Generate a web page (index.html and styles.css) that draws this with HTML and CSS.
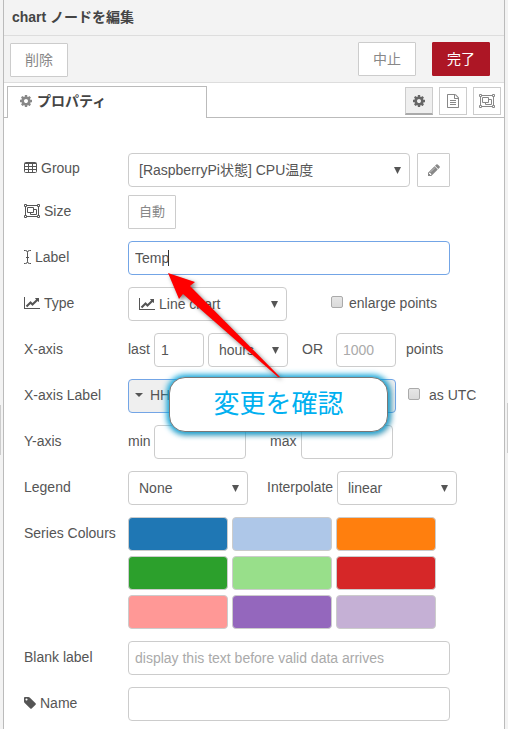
FILE: index.html
```html
<!DOCTYPE html>
<html lang="ja">
<head>
<meta charset="utf-8">
<meta name="viewport" content="width=device-width, initial-scale=1">
<title>chart ノードを編集</title>
<link rel="stylesheet" href="styles.css">
</head>
<body>
<svg class="sprite" aria-hidden="true">
  <symbol id="cog" viewBox="128 0 1536 1792"><path d="M1152 896q0-106-75-181t-181-75-181 75-75 181 75 181 181 75 181-75 75-181zm512-109v222q0 12-8 23t-20 13l-185 28q-19 54-39 91 35 50 107 138 10 12 10 25t-9 23q-27 37-99 108t-94 71q-12 0-26-9l-138-108q-44 23-91 38-16 136-29 186-7 28-36 28h-222q-14 0-24.5-8.5t-11.5-21.5l-28-184q-49-16-90-37l-141 107q-10 9-25 9-14 0-25-11-126-114-165-168-7-10-7-23 0-12 8-23 15-21 51-66.5t54-70.5q-27-50-41-99l-183-27q-13-2-21-12.5t-8-23.5v-222q0-12 8-23t19-13l186-28q14-46 39-92-40-57-107-138-10-12-10-24 0-10 9-23 26-36 98.5-107.5t94.5-71.5q13 0 26 10l138 107q44-23 91-38 16-136 29-186 7-28 36-28h222q14 0 24.5 8.5t11.5 21.5l28 184q49 16 90 37l142-107q9-9 24-9 13 0 25 10 129 119 165 170 7 8 7 22 0 12-8 23-15 21-51 66.5t-54 70.5q26 50 41 98l183 28q13 2 21 12.5t8 23.5z"/></symbol>
  <symbol id="file" viewBox="128 0 1536 1792"><path d="M1596 380q28 28 48 76t20 88v1152q0 40-28 68t-68 28h-1344q-40 0-68-28t-28-68v-1600q0-40 28-68t68-28h896q40 0 88 20t76 48zm-444-244v376h376q-10-29-22-41l-313-313q-12-12-41-22zm384 1528v-1024h-416q-40 0-68-28t-28-68v-416h-768v1536h1280zm-1024-864q0-14 9-23t23-9h704q14 0 23 9t9 23v64q0 14-9 23t-23 9h-704q-14 0-23-9t-9-23v-64zm736 224q14 0 23 9t9 23v64q0 14-9 23t-23 9h-704q-14 0-23-9t-9-23v-64q0-14 9-23t23-9h704zm0 256q14 0 23 9t9 23v64q0 14-9 23t-23 9h-704q-14 0-23-9t-9-23v-64q0-14 9-23t23-9h704z"/></symbol>
  <symbol id="group" viewBox="0 0 16 14"><path fill="none" stroke="currentColor" d="M.5.5h2v2h-2zM13.5.5h2v2h-2zM.5 11.5h2v2h-2zM13.5 11.5h2v2h-2zM3 1.5h10M3 12.5h10M1.5 3v8M14.5 3v8M3.5 3.5h6v5h-6zM10 5.5h2.500v5h-6V9"/></symbol>
  <symbol id="table" viewBox="0 0 13 14"><path fill="none" stroke="currentColor" d="M1.500 1.500h10q1 0 1 1v8q0 1-1 1h-10q-1 0-1-1v-8q0-1 1-1zM1 2.500h11M1 5.500h11M1 8.500h11M4.500 2v9M8.500 2v9"/></symbol>
  <symbol id="cursor" viewBox="0 0 7 14"><path fill="none" stroke="currentColor" d="M0 .5h1.500q2 0 2 2v9q0 2-2 2H0M7 .5H5.500q-2 0-2 2M7 13.500H5.500q-2 0-2-2M2 7.500h3"/></symbol>
  <symbol id="line" viewBox="0 0 2048 1792"><path d="M2048 1536v128h-2048v-1536h128v1408h1920zm-128-1248v435q0 21-19.500 29.500t-35.500-7.500l-121-121-633 633q-10 10-23 10t-23-10l-233-233-416 416-192-192 585-585q10-10 23-10t23 10l233 233 464-464-121-121q-16-16-7.500-35.500t29.500-19.500h435q14 0 23 9t9 23z"/></symbol>
  <symbol id="pencil" viewBox="128 0 1536 1792"><path d="M491 1536l91-91-235-235-91 91v107h128v128h107zm523-928q0-22-22-22-10 0-17 7l-542 542q-7 7-7 17 0 22 22 22 10 0 17-7l542-542q7-7 7-17zm-54-192l416 416-832 832h-416v-416zm683 96q0 53-37 90l-166 166-416-416 166-165q36-38 90-38 53 0 91 38l235 234q37 39 37 91z"/></symbol>
  <symbol id="tag" viewBox="128 0 1536 1792"><path d="M576 448q0-53-37.500-90.500t-90.500-37.500-90.500 37.500-37.500 90.500 37.500 90.500 90.500 37.500 90.500-37.500 37.500-90.500zm1067 576q0 53-37 90l-491 492q-39 37-91 37-53 0-90-37l-715-716q-38-37-64.500-101t-26.500-117v-416q0-52 38-90t90-38h416q53 0 117 26.500t102 64.500l715 714q37 39 37 91z"/></symbol>
</svg>
<div class="app">
  <div class="gutter gutter-left"></div>
  <main class="tray">
    <header class="title">chart ノードを編集</header>
    <div class="toolbar">
      <button type="button" class="btn delete">削除</button>
      <div class="actions">
        <button type="button" class="btn">中止</button>
        <button type="button" class="btn primary">完了</button>
      </div>
    </div>
    <div class="tabs">
      <button type="button" class="tab"><svg class="icon w12"><use href="#cog"/></svg>プロパティ</button>
      <div class="views">
        <button type="button" class="view selected" aria-label="プロパティ"><svg class="icon w12"><use href="#cog"/></svg></button>
        <button type="button" class="view" aria-label="説明"><svg class="icon w12"><use href="#file"/></svg></button>
        <button type="button" class="view" aria-label="外観"><svg class="icon w16"><use href="#group"/></svg></button>
      </div>
    </div>
    <form class="form">
      <div class="row compact">
        <label class="name" for="f-group"><svg class="icon w13"><use href="#table"/></svg>Group</label>
        <div class="controls">
          <span class="select wide"><select id="f-group"><option>[RaspberryPi状態] CPU温度</option></select></span>
          <button type="button" class="btn edit" aria-label="編集"><svg class="icon w12"><use href="#pencil"/></svg></button>
        </div>
      </div>
      <div class="row">
        <label class="name" for="f-size"><svg class="icon w16"><use href="#group"/></svg>Size</label>
        <div class="controls"><button type="button" id="f-size" class="btn size">自動</button></div>
      </div>
      <div class="row">
        <label class="name" for="f-label"><svg class="icon w7"><use href="#cursor"/></svg>Label</label>
        <div class="controls anchor"><input id="f-label" class="full active" type="text" value="Temp"><span class="caret"></span></div>
      </div>
      <div class="row">
        <label class="name" for="f-type"><svg class="icon w16"><use href="#line"/></svg>Type</label>
        <div class="controls">
          <span class="select type"><svg class="icon w16"><use href="#line"/></svg><select id="f-type"><option>Line chart</option></select></span>
          <label class="check enlarge"><input type="checkbox"><span>enlarge points</span></label>
        </div>
      </div>
      <div class="row">
        <label class="name" for="f-last">X-axis</label>
        <div class="controls">
          <label class="text unit" for="f-last">last</label>
          <input id="f-last" class="count" type="text" value="1">
          <span class="select period"><select aria-label="期間"><option>hours</option></select></span>
          <label class="text or" for="f-points">OR</label>
          <input id="f-points" class="points" type="text" placeholder="1000">
          <label class="text after" for="f-points">points</label>
        </div>
      </div>
      <div class="row">
        <label class="name" for="f-format">X-axis Label</label>
        <div class="controls">
          <button type="button" id="f-format" class="format">HH:mm:ss</button>
          <label class="check utc"><input type="checkbox"><span>as UTC</span></label>
        </div>
      </div>
      <div class="row">
        <label class="name" for="f-min">Y-axis</label>
        <div class="controls">
          <label class="text unit" for="f-min">min</label>
          <input id="f-min" class="limit" type="text">
          <label class="text max" for="f-max">max</label>
          <input id="f-max" class="limit" type="text">
        </div>
      </div>
      <div class="row">
        <label class="name" for="f-legend">Legend</label>
        <div class="controls">
          <span class="select short"><select id="f-legend"><option>None</option></select></span>
          <label class="text interpolate" for="f-inter">Interpolate</label>
          <span class="select short"><select id="f-inter"><option>linear</option></select></span>
        </div>
      </div>
      <div class="row">
        <span class="name">Series Colours</span>
        <div class="swatches">
          <button type="button" class="swatch c1" aria-label="1"></button>
          <button type="button" class="swatch c2" aria-label="2"></button>
          <button type="button" class="swatch c3" aria-label="3"></button>
          <button type="button" class="swatch c4" aria-label="4"></button>
          <button type="button" class="swatch c5" aria-label="5"></button>
          <button type="button" class="swatch c6" aria-label="6"></button>
          <button type="button" class="swatch c7" aria-label="7"></button>
          <button type="button" class="swatch c8" aria-label="8"></button>
          <button type="button" class="swatch c9" aria-label="9"></button>
        </div>
      </div>
      <div class="row">
        <label class="name" for="f-blank">Blank label</label>
        <div class="controls"><input id="f-blank" class="full" type="text" placeholder="display this text before valid data arrives"></div>
      </div>
      <div class="row">
        <label class="name" for="f-name"><svg class="icon w12"><use href="#tag"/></svg>Name</label>
        <div class="controls"><input id="f-name" class="full" type="text"></div>
      </div>
    </form>
  </main>
  <div class="gutter gutter-right"></div>
  <svg class="arrow" viewBox="0 0 130 120" aria-hidden="true"><path d="M8 13l27 9-5 4 90 91h-2L23 34l-4 5z"/></svg>
  <div class="callout">変更を確認</div>
</div>
</body>
</html>
```

FILE: styles.css
```css
* {
  box-sizing: border-box;
}

body {
  margin: 0;
  background: #f3f3f3;
  color: #555;
  font: 14px/20px "Liberation Sans", "Noto Sans CJK JP", sans-serif;
}

button,
input,
select {
  margin: 0;
  font: inherit;
  color: inherit;
}

.sprite {
  display: none;
}

.app {
  position: relative;
  display: flex;
  min-height: 100vh;
}

.gutter {
  flex: none;
  width: 3px;
  padding-top: 405px;
}

.gutter::before {
  content: "";
  display: block;
  width: 1px;
  height: 50px;
  background: #ccc;
}

.gutter-right {
  padding-top: 403px;
}

.gutter-right::before {
  margin-left: auto;
}

.tray {
  flex: 1;
  min-width: 0;
  background: #fff;
  border: solid #bbb;
  border-width: 0 1px;
}

.title {
  height: 36px;
  padding: 7px 8px;
  background: #f3f3f3;
  border-bottom: 1px solid #ddd;
  color: #444;
  font-weight: bold;
}

.toolbar {
  display: flex;
  justify-content: space-between;
  padding: 6px 14px 5px 6px;
  background: #f3f3f3;
  border-bottom: 1px solid #ddd;
}

.actions {
  display: flex;
  gap: 16px;
}

.btn {
  width: 58px;
  height: 34px;
  padding: 0;
  background: #fff;
  border: 1px solid #ccc;
  border-radius: 1px;
  color: #888;
}

.delete {
  margin-top: 1px;
}

.primary {
  background: #ad1625;
  border-color: #ad1625;
  color: #fff;
}

.icon {
  flex: none;
  height: 14px;
  fill: currentColor;
}

.w7 { width: 7px; }
.w12 { width: 12px; }
.w13 { width: 13px; }
.w16 { width: 16px; }

.tabs {
  display: flex;
  justify-content: space-between;
  height: 35px;
  padding: 3px 3px 0;
  border-bottom: 1px solid #bbb;
}

.tab {
  display: flex;
  align-items: center;
  gap: 5px;
  width: 200px;
  height: 32px;
  padding: 0 12px 4px;
  background: #fff;
  border: 1px solid #bbb;
  border-bottom: 0;
  color: #444;
  font-weight: bold;
}

.tab .icon {
  color: #888;
}

.views {
  display: flex;
  gap: 6px;
  padding-top: 1px;
}

.view {
  display: flex;
  align-items: center;
  justify-content: center;
  width: 28px;
  height: 28px;
  padding: 0;
  background: #fff;
  border: 1px solid #ccc;
  color: #888;
}

.view.selected {
  background: #efefef;
  border-bottom: 2px solid #aaa;
  color: #666;
}

.form {
  display: flex;
  flex-direction: column;
  gap: 12px;
  padding: 35px 20px 4px;
}

.row {
  display: grid;
  grid-template-columns: 104px 1fr;
}

.compact {
  margin-bottom: -4px;
}

.name {
  display: flex;
  align-items: center;
  gap: 4px;
  height: 32px;
  white-space: nowrap;
}

.compact .name {
  height: 30px;
}

.controls {
  display: flex;
  align-items: center;
}

.anchor {
  position: relative;
}

.text,
.check span {
  padding-bottom: 2px;
}

input[type="text"],
select {
  height: 34px;
  background: #fff;
  border: 1px solid #ccc;
  border-radius: 4px;
  padding: 0 6px;
  outline: 0;
}

::placeholder {
  color: #aaa;
  opacity: 1;
}

.select {
  position: relative;
  display: flex;
}

.select select {
  appearance: none;
  width: 100%;
  padding: 0 10px;
}

.select::after {
  content: "";
  position: absolute;
  right: 9px;
  top: 14px;
  width: 7px;
  height: 7px;
  background: #555;
  clip-path: polygon(0 0, 100% 0, 50% 100%);
  pointer-events: none;
}

.wide { width: 282px; }
.type { width: 159px; }
.period { width: 80px; margin-left: 4px; }
.short { width: 120px; }

.type .icon {
  position: absolute;
  left: 11px;
  top: 10px;
}

.type select {
  padding-left: 30px;
}

.edit {
  display: flex;
  align-items: center;
  justify-content: center;
  width: 33px;
  margin-left: 7px;
}

.size {
  width: 48px;
  font-size: 13px;
}

.full {
  width: 322px;
}

input.active {
  border-color: #73a5e6;
}

.caret {
  position: absolute;
  left: 40px;
  top: 9px;
  width: 1px;
  height: 16px;
  background: #333;
}

.check {
  display: flex;
  align-items: center;
}

.check input {
  appearance: none;
  width: 12px;
  height: 12px;
  margin-bottom: 5px;
  background: linear-gradient(#e6e6e6, #dadada);
  border: 1px solid #aaa;
  border-radius: 2px;
}

.enlarge { gap: 6px; margin-left: 44px; }
.utc { gap: 9px; margin-left: 12px; }

.unit { width: 26px; }
.count { width: 50px; }
.or { width: 48px; padding-left: 14px; }
.points { width: 60px; }
.after { margin-left: 10px; }
.limit { width: 92px; }
.max { width: 55px; padding-left: 24px; }
.interpolate { width: 89px; padding-left: 19px; }

.format {
  display: flex;
  align-items: center;
  gap: 7px;
  width: 268px;
  height: 34px;
  padding: 0 6px 2px;
  background: #efefef;
  border: 1px solid #73a5e6;
  border-radius: 4px;
}

.format::before {
  content: "";
  width: 8px;
  height: 4px;
  background: #555;
  clip-path: polygon(0 0, 100% 0, 50% 100%);
}

.swatches {
  display: grid;
  grid-template-columns: repeat(3, 100px);
  gap: 5px 4px;
}

.swatch {
  height: 34px;
  border: 1px solid #ccc;
  border-radius: 4px;
}

.c1 { background: #1f77b4; }
.c2 { background: #aec7e8; }
.c3 { background: #ff7f0e; }
.c4 { background: #2ca02c; }
.c5 { background: #98df8a; }
.c6 { background: #d62728; }
.c7 { background: #ff9896; }
.c8 { background: #9467bd; }
.c9 { background: #c5b0d5; }

.arrow {
  position: absolute;
  z-index: 1;
  left: 160px;
  top: 260px;
  width: 130px;
  height: 120px;
  fill: #f00;
  filter: drop-shadow(2px 2px 2px rgba(0, 0, 0, 0.5));
  pointer-events: none;
}

.callout {
  position: absolute;
  left: 169px;
  top: 377px;
  width: 219px;
  height: 55px;
  background: #fff;
  border: 1px solid #777;
  border-radius: 16px;
  box-shadow: 0 0 6px 2px #00a5df, 2px 2px 6px rgba(0, 0, 0, 0.4);
  color: #00b0f0;
  font-family: "Noto Sans CJK JP", sans-serif;
  font-size: 26px;
  line-height: 48px;
  text-align: center;
}
```
